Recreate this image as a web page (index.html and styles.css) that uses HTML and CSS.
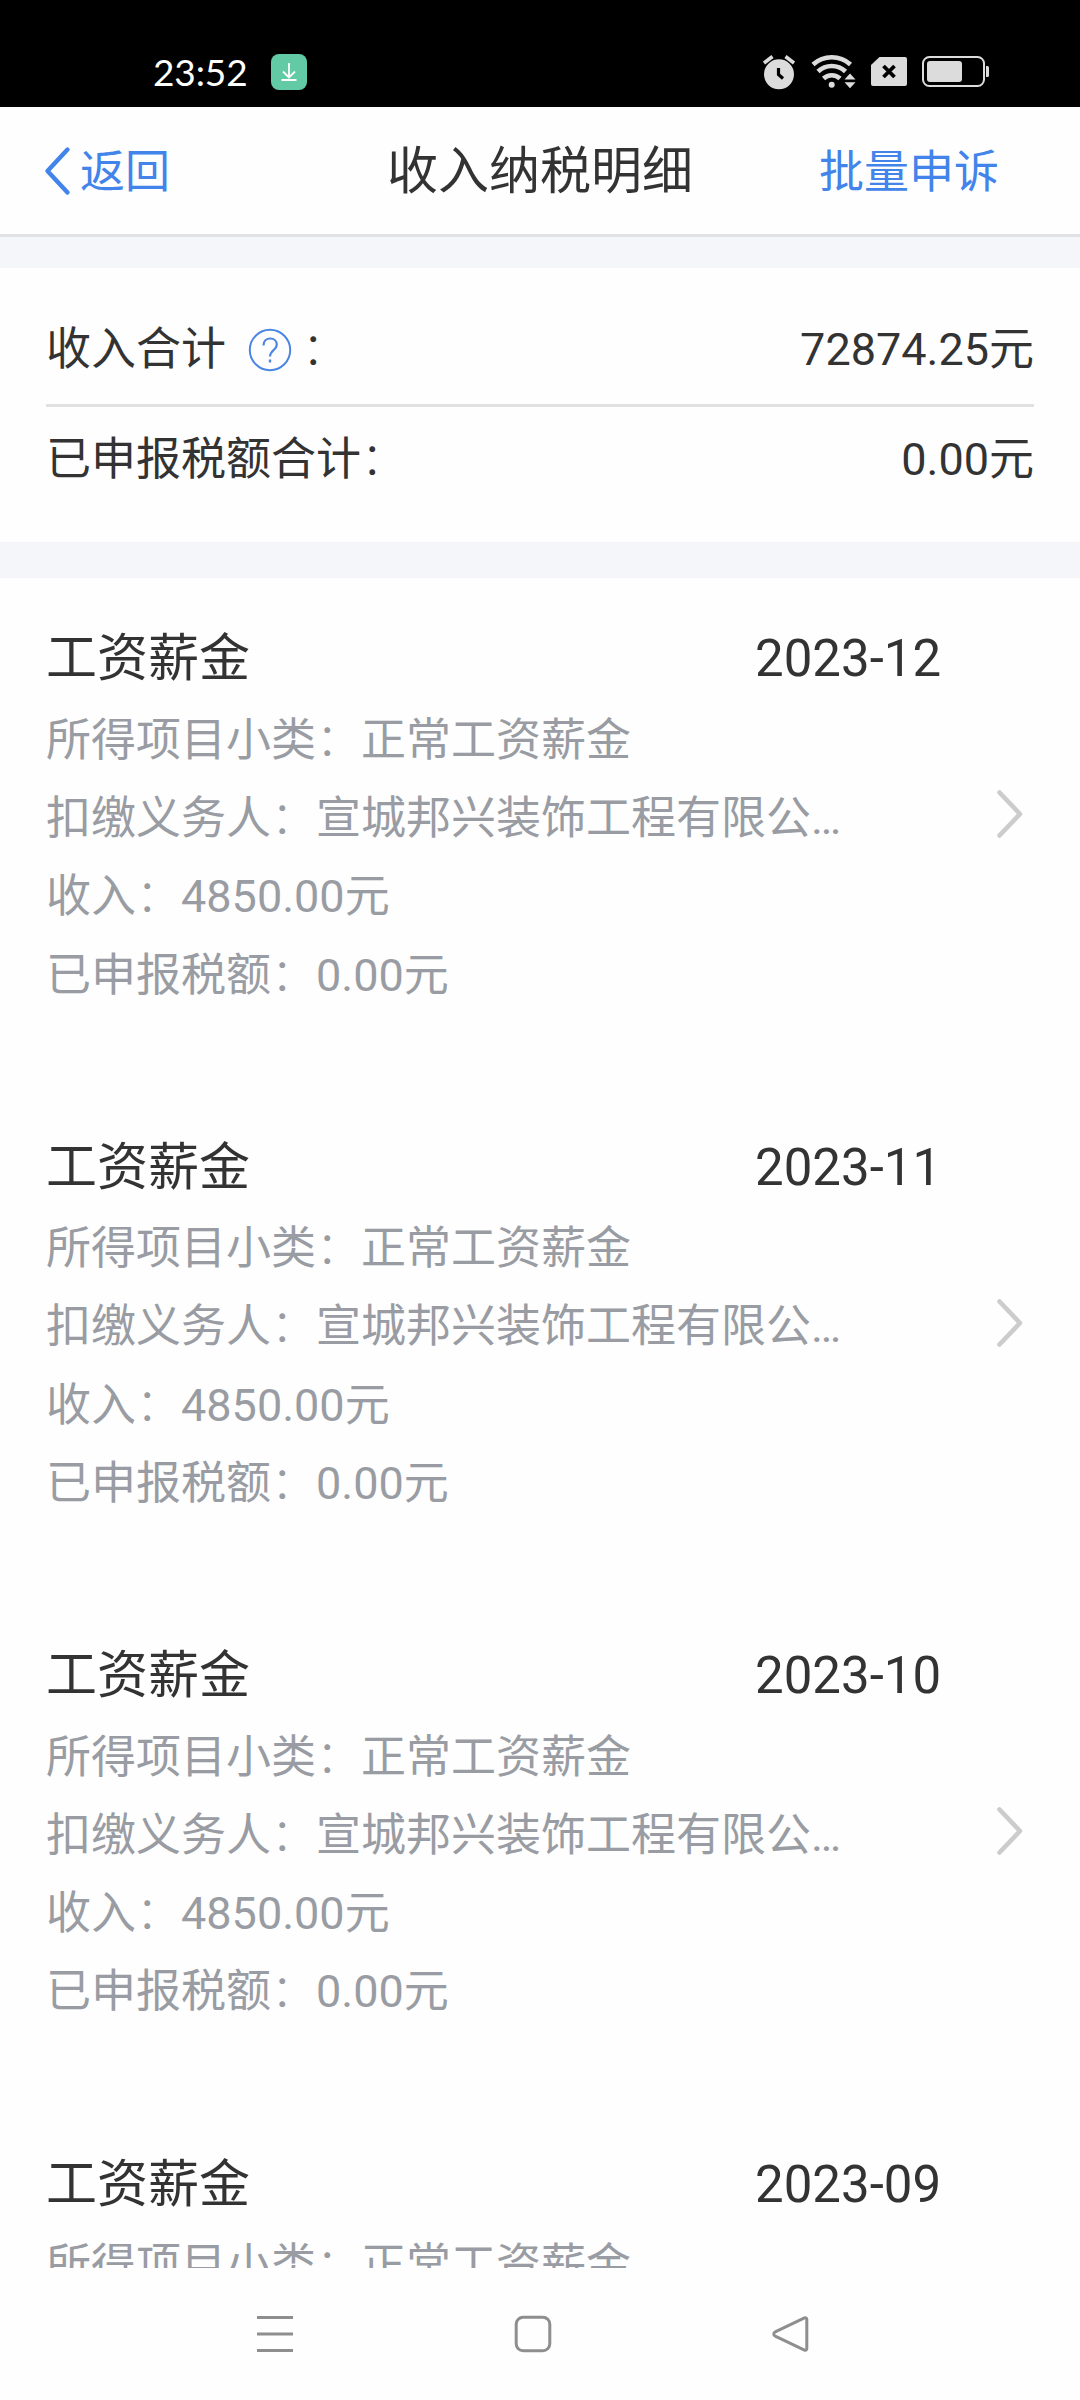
FILE: index.html
```html
<!DOCTYPE html>
<html lang="zh-CN">
<head>
<meta charset="utf-8">
<title>收入纳税明细</title>
<link rel="stylesheet" href="styles.css">
</head>
<body>
<div class="screen">
  <div class="status">
    <span class="clock">23:52</span>
    <svg class="download" width="36" height="36" viewBox="0 0 36 36"><rect width="36" height="36" rx="8" fill="#62caa5"/><path d="M18 9v14M12 17.500l6 6 6-6M10.500 26h15" fill="none" stroke="#fff" stroke-width="1.800"/></svg>
    <div class="indicators">
      <svg width="32" height="36" viewBox="764 54 32 36"><circle cx="780" cy="74.300" r="15" fill="#dcdcdc"/><path d="M765 63l8.500-6.500M795 63l-8.500-6.500" stroke="#dcdcdc" stroke-width="3.600"/><path d="M779.500 68v6.500l4.500 4" fill="none" stroke="#000" stroke-width="3.200"/></svg>
      <svg width="46" height="36" viewBox="811 54 46 36"><g fill="none" stroke="#dcdcdc" stroke-width="4.600"><path d="M814 64.500a28 28 0 0 1 37.500 0"/><path d="M819 71.500a20 20 0 0 1 27.500 0"/><path d="M824.500 78.500a12 12 0 0 1 16.500 0"/></g><circle cx="832.700" cy="84.700" r="3" fill="#dcdcdc"/><path d="M845.500 79.500l5.500-6 5.500 6zM845.500 82.300l5.500 6 5.500-6z" fill="#dcdcdc"/></svg>
      <svg width="36" height="36" viewBox="870 54 36 36"><path d="M878.500 57H904a2 2 0 0 1 2 2v25a2 2 0 0 1-2 2H872a2 2 0 0 1-2-2V65z" fill="#dcdcdc"/><path d="M882.500 66l11 11M893.500 66l-11 11" stroke="#000" stroke-width="3.800"/></svg>
      <svg width="68" height="36" viewBox="923 54 68 36"><rect x="924" y="57" width="61" height="29" rx="6.500" fill="none" stroke="#dcdcdc" stroke-width="2"/><rect x="928" y="61" width="35" height="21" rx="3" fill="#dcdcdc"/><path d="M987 66h1.500a1.500 1.500 0 0 1 1.500 1.500v8a1.500 1.500 0 0 1-1.500 1.500H987z" fill="#dcdcdc"/></svg>
    </div>
  </div>
  <header class="nav">
    <div class="back"><svg width="28" height="50" viewBox="0 0 28 50"><path d="M24.500 3.500L4.500 25l20 21.500" fill="none" stroke="#4284ea" stroke-width="4.400" stroke-linecap="round" stroke-linejoin="round"/></svg><span>返回</span></div>
    <h1 class="title">收入纳税明细</h1>
    <div class="action">批量申诉</div>
  </header>
  <section class="summary">
    <div class="sum-row">
      <span class="sum-label">收入合计<svg class="help" width="44" height="44" viewBox="0 0 44 44"><g fill="none" stroke="#4a86e2" stroke-width="2"><circle cx="22" cy="22" r="20.200"/><path d="M15.500 17.500c0-4.500 3-7 6.800-7s6.500 2.700 6.500 6.200c0 5-6.800 5.800-6.800 11.800" stroke-width="2.200"/></g><rect x="20.800" y="31.500" width="2.400" height="3" fill="#4a86e2"/></svg><span class="colon">：</span></span>
      <span>72874.25元</span>
    </div>
    <div class="sum-row"><span>已申报税额合计<span class="colon">：</span></span><span>0.00元</span></div>
  </section>
  <main class="list">
    <article class="item">
      <div class="details">
        <div class="head"><span>工资薪金</span><span class="month">2023-12</span></div>
        <p>所得项目小类<span class="colon">：</span>正常工资薪金</p><p>扣缴义务人<span class="colon">：</span>宣城邦兴装饰工程有限公…</p><p>收入<span class="colon">：</span>4850.00元</p><p>已申报税额<span class="colon">：</span>0.00元</p>
      </div>
      <svg class="chevron" width="30" height="52" viewBox="0 0 30 52"><path d="M4.500 4.500L25 26 4.500 47.500"/></svg>
    </article>
    <article class="item">
      <div class="details">
        <div class="head"><span>工资薪金</span><span class="month">2023-11</span></div>
        <p>所得项目小类<span class="colon">：</span>正常工资薪金</p><p>扣缴义务人<span class="colon">：</span>宣城邦兴装饰工程有限公…</p><p>收入<span class="colon">：</span>4850.00元</p><p>已申报税额<span class="colon">：</span>0.00元</p>
      </div>
      <svg class="chevron" width="30" height="52" viewBox="0 0 30 52"><path d="M4.500 4.500L25 26 4.500 47.500"/></svg>
    </article>
    <article class="item">
      <div class="details">
        <div class="head"><span>工资薪金</span><span class="month">2023-10</span></div>
        <p>所得项目小类<span class="colon">：</span>正常工资薪金</p><p>扣缴义务人<span class="colon">：</span>宣城邦兴装饰工程有限公…</p><p>收入<span class="colon">：</span>4850.00元</p><p>已申报税额<span class="colon">：</span>0.00元</p>
      </div>
      <svg class="chevron" width="30" height="52" viewBox="0 0 30 52"><path d="M4.500 4.500L25 26 4.500 47.500"/></svg>
    </article>
    <article class="item">
      <div class="details">
        <div class="head"><span>工资薪金</span><span class="month">2023-09</span></div>
        <p>所得项目小类<span class="colon">：</span>正常工资薪金</p>
      </div>
    </article>
  </main>
  <footer class="keys">
    <svg width="40" height="40" viewBox="0 0 40 40"><path d="M2 3.500h36M2 20h36M2 36.500h36"/></svg>
    <svg width="40" height="40" viewBox="0 0 40 40"><rect x="3.200" y="3.200" width="33.600" height="33.600" rx="7"/></svg>
    <svg width="40" height="40" viewBox="0 0 40 40"><path d="M33.500 3.800L4.200 17.800a2.400 2.400 0 0 0 0 4.400l29.300 14a1.700 1.700 0 0 0 2.300-1.500V5.300a1.700 1.700 0 0 0-2.300-1.500z"/></svg>
  </footer>
</div>
</body>
</html>
```
FILE: styles.css
```css
* { box-sizing: border-box; }
body { margin: 0; }
.screen {
  width: 1080px;
  height: 2400px;
  display: flex;
  flex-direction: column;
  overflow: hidden;
  background: #fefefe;
  color: #333;
  font: 45px Roboto, "Noto Sans CJK SC", sans-serif;
}
svg { display: block; flex: none; }
.status {
  height: 107px;
  flex: none;
  display: flex;
  align-items: flex-start;
  padding: 54px 90px 0 153px;
  background: #000;
  color: #fff;
}
.clock {
  width: 118px;
  font: 37px/35px Lato, sans-serif;
  letter-spacing: -0.1px;
}
.indicators { display: flex; gap: 15px; margin-left: auto; }
.nav {
  height: 130px;
  flex: none;
  display: grid;
  grid-template-columns: 1fr auto 1fr;
  align-items: center;
  padding: 0 81px 0 43px;
  border-bottom: 3px solid #e1e1e6;
}
.back { display: flex; align-items: center; gap: 9px; color: #4284ea; line-height: 54px; }
.back span, .action { padding-top: 4px; }
.title { margin: 0 0 0 38px; padding-top: 3px; font-size: 51px; font-weight: 400; line-height: 60px; }
.action { justify-self: end; color: #4284ea; line-height: 54px; }
.summary {
  height: 341px;
  flex: none;
  padding: 28px 46px 0;
  border-top: 31px solid #f5f6fa;
  border-bottom: 36px solid #f5f6fa;
}
.sum-row {
  display: flex;
  justify-content: space-between;
  align-items: center;
  height: 108px;
  line-height: 54px;
}
.sum-row + .sum-row { border-top: 3px solid #e1e1e1; }
.sum-label { display: flex; align-items: center; }
.help { margin: 0 10px 0 22px; }
.colon { font-weight: 300; }
.list { flex: 1; min-height: 0; overflow: hidden; }
.item {
  height: 508.4px;
  display: flex;
  justify-content: space-between;
  padding: 38.4px 54px 0 46px;
}
.details { width: 895px; color: #999ca3; line-height: 78.3px; }
.head {
  display: flex;
  justify-content: space-between;
  color: #333;
  font-size: 51px;
  line-height: 85.4px;
}
.month { width: 186px; white-space: nowrap; }
.details p { margin: 0; white-space: nowrap; }
.chevron { margin: 172px 1px 0 0; fill: none; stroke: #ccc; stroke-width: 4.6px; stroke-linecap: round; stroke-linejoin: round; }
.keys {
  height: 132px;
  flex: none;
  display: flex;
  justify-content: space-between;
  padding: 46px 269px 0 255px;
}
.keys svg { fill: none; stroke: #8e8e8e; stroke-width: 3px; }
```
